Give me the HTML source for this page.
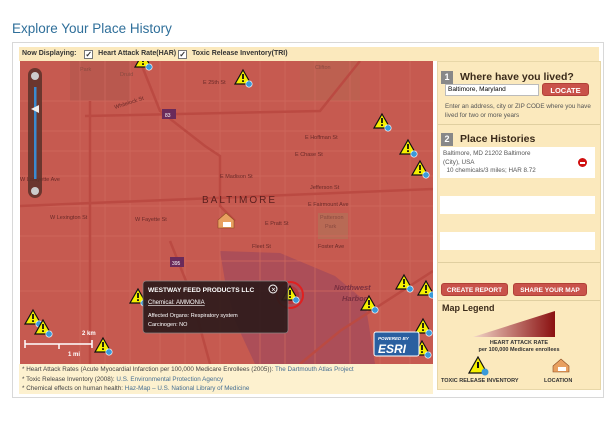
<!DOCTYPE html>
<html><head><meta charset="utf-8">
<style>
*{margin:0;padding:0;box-sizing:border-box}
body{width:615px;height:424px;background:#fff;font-family:"Liberation Sans",Verdana,sans-serif;position:relative;overflow:hidden}
.title{position:absolute;left:12px;top:21px;font-size:13.5px;color:#2f6f9a}
.outer{position:absolute;left:12px;top:42px;width:592px;height:356px;border:1px solid #d8d8d8;background:#fff}
.bar{position:absolute;left:6px;top:4px;width:580px;height:14px;background:#fbe9bd;font-size:7px;font-weight:bold;color:#333;line-height:14px;padding-left:3px}
.cb{display:inline-block;width:9px;height:9px;border:1px solid #777;background:#fff;vertical-align:-2px;font-size:8px;line-height:7px;text-align:center;margin:0 3px 0 0}
.map{position:absolute;left:7px;top:18px;width:413px;height:303px;overflow:hidden}
.panel{position:absolute;left:424px;top:18px;width:164px;height:329px;background:#fbe9bd;border:1px solid #e8d7a8}
.foot{position:absolute;left:6px;top:321px;width:414px;height:30px;background:#fdf1cf;font-size:6.3px;color:#444;line-height:9.5px;padding:1px 0 0 3px;white-space:nowrap}
.foot span{color:#466f93}
.num{display:inline-block;width:12px;height:13px;background:#888;color:#fff;font-size:9px;font-weight:bold;text-align:center;line-height:13px;margin-right:7px}
.h{font-size:10.5px;font-weight:bold;color:#3a2a1a}
.btn{position:absolute;height:13px;background:#c9524a;color:#fff;font-size:6.5px;font-weight:bold;text-align:center;line-height:13px;border-radius:3px;border:1px solid #b04038}
</style></head><body>
<div class="title">Explore Your Place History</div>
<div class="outer">
 <div class="bar">Now Displaying: &nbsp;&nbsp;&nbsp;<span class="cb">✓</span> Heart Attack Rate(HAR) <span class="cb">✓</span> Toxic Release Inventory(TRI)</div>
 <div class="map">
 <svg width="413" height="303" viewBox="0 0 413 303" font-family="Liberation Sans,sans-serif">
  <defs>
   <g id="w"><path d="M0,-8 L8,6 L-8,6 Z" fill="#f5f000" stroke="#111" stroke-width="1.2"/><rect x="-0.9" y="-4" width="1.8" height="5" fill="#111"/><rect x="-0.9" y="2.2" width="1.8" height="1.8" fill="#111"/><circle cx="6" cy="6" r="3.2" fill="#3a9ad9" stroke="#fff" stroke-width="0.6"/></g>
  </defs>
  <rect width="413" height="303" fill="#c65a50"/>
  <rect x="50" y="0" width="60" height="40" fill="#b9584e"/>
  <rect x="280" y="0" width="60" height="40" fill="#bd6050"/>
  <rect x="298" y="152" width="30" height="26" fill="#b86a55"/>
  <path d="M200,190 L260,192 L315,215 L345,240 L355,303 L235,303 L215,260 L205,220 Z" fill="#ac4e58"/>
  <g stroke="#cf6a5e" stroke-width="0.7" fill="none">
   <path d="M0,70 H413 M0,90 H413 M0,115 H413 M0,145 H413 M0,175 H413 M0,200 H413 M0,230 H413 M0,40 H413"/>
   <path d="M60,0 V303 M85,0 V303 M110,0 V303 M140,0 V303 M165,0 V303 M200,0 V303 M240,0 V303 M265,0 V303 M295,0 V303 M330,0 V303 M360,0 V303 M390,0 V303"/>
  </g>
  <g stroke="#bb4a42" stroke-width="2.5" fill="none">
   <path d="M120,0 L140,50 L185,85 L200,95 L200,145 L215,160"/>
   <path d="M0,145 L413,128"/>
   <path d="M65,55 L300,50 L340,0"/>
   <path d="M70,40 V303"/>
   <path d="M150,180 L170,230 L190,303"/>
   <path d="M413,210 L320,270 L280,303"/>
  </g>
  <g font-size="5.5" fill="#6a2a28">
   <text x="183" y="23">E 25th St</text><text x="285" y="78">E Hoffman St</text><text x="275" y="95">E Chase St</text>
   <text x="200" y="117">E Madison St</text><text x="290" y="128">Jefferson St</text><text x="288" y="145">E Fairmount Ave</text>
   <text x="30" y="158">W Lexington St</text><text x="115" y="160">W Fayette St</text><text x="245" y="164">E Pratt St</text>
   <text x="232" y="187">Fleet St</text><text x="298" y="187">Foster Ave</text><text x="0" y="120">W Lafayette Ave</text>
   <text x="95" y="48" transform="rotate(-18 95 48)">Whitelock St</text><text x="300" y="158" fill="#8a4a40">Patterson</text><text x="305" y="167" fill="#8a4a40">Park</text>
   <text x="295" y="8" fill="#8a4a40">Clifton</text><text x="60" y="10" fill="#8a4a40">Park</text><text x="100" y="15" fill="#8a4a40">Druid</text>
  </g>
  <text x="182" y="142" font-size="10" fill="#5a1f1e" letter-spacing="2">BALTIMORE</text>
  <text x="314" y="229" font-size="7.5" fill="#7a3040" font-style="italic" font-weight="bold">Northwest</text>
  <text x="322" y="240" font-size="7.5" fill="#7a3040" font-style="italic" font-weight="bold">Harbor</text>
  <rect x="142" y="48" width="14" height="10" fill="#6a2a5a"/><text x="145" y="56" font-size="5" fill="#fff">83</text>
  <rect x="150" y="196" width="14" height="10" fill="#6a2a5a"/><text x="152" y="204" font-size="5" fill="#fff">395</text>
  <rect x="8" y="7" width="14" height="130" rx="7" fill="#5a3028" opacity="0.85"/>
  <circle cx="15" cy="15" r="4" fill="#ccc"/><circle cx="15" cy="130" r="4" fill="#ccc"/>
  <rect x="14" y="26" width="2.5" height="92" fill="#3a8ad0"/>
  <path d="M11,48 L19,44 L19,52Z" fill="#eee"/>
  <path d="M198,159 L206,152 L214,159 L214,167 L198,167Z" fill="#e8a060" stroke="#8a4a20" stroke-width="0.6"/><rect x="203" y="161" width="8" height="5" fill="#fff"/>
  <use href="#w" x="223" y="17"/><use href="#w" x="362" y="61"/><use href="#w" x="388" y="87"/><use href="#w" x="400" y="108"/>
  <use href="#w" x="123" y="0"/><use href="#w" x="384" y="222"/><use href="#w" x="406" y="228"/><use href="#w" x="349" y="243"/>
  <use href="#w" x="13" y="257"/><use href="#w" x="23" y="267"/><use href="#w" x="83" y="285"/><use href="#w" x="402" y="288"/>
  <use href="#w" x="118" y="236"/><use href="#w" x="403" y="266"/>
  <circle cx="270" cy="234" r="13" fill="none" stroke="#e02020" stroke-width="2"/><circle cx="270" cy="234" r="9" fill="#c02020" opacity="0.5"/>
  <use href="#w" x="270" y="233"/>
  <rect x="123" y="220" width="145" height="52" rx="3" fill="#2e1b1b" opacity="0.92" stroke="#888" stroke-width="0.7"/>
  <text x="128" y="231" font-size="6.6" font-weight="bold" fill="#fff">WESTWAY FEED PRODUCTS LLC</text>
  <circle cx="253" cy="228" r="4" fill="none" stroke="#fff"/><text x="251" y="230.5" font-size="6" fill="#fff">✕</text>
  <text x="128" y="243" font-size="6" fill="#fff" text-decoration="underline">Chemical: AMMONIA</text>
  <text x="128" y="256" font-size="5.5" fill="#fff">Affected Organs: Respiratory system</text>
  <text x="128" y="265" font-size="5.5" fill="#fff">Carcinogen: NO</text>
  <g stroke="#fff" stroke-width="1.5"><path d="M5,283 H72 M5,279 V287 M72,279 V287 M39,283 V288"/></g>
  <text x="62" y="274" font-size="6" font-weight="bold" fill="#fff">2 km</text><text x="48" y="295" font-size="6" font-weight="bold" fill="#fff">1 mi</text>
  <rect x="354" y="271" width="45" height="24" rx="2" fill="#2a5fa0" stroke="#fff" stroke-width="1"/>
  <text x="358" y="279" font-size="4.5" font-weight="bold" fill="#fff" font-style="italic">POWERED BY</text>
  <text x="358" y="292" font-size="12" font-weight="bold" fill="#fff" font-style="italic">ESRI</text>
 </svg>
 </div>
 <div class="panel">
  <div style="position:absolute;left:3px;top:5px"><span class="num">1</span><span class="h">Where have you lived?</span></div>
  <div style="position:absolute;left:7px;top:22px;width:94px;height:12px;background:#fff;border:1px solid #bbb;font-size:6.5px;line-height:10px;padding-left:2px">Baltimore, Maryland</div>
  <div class="btn" style="left:104px;top:21px;width:47px;height:13px;font-size:7.5px">LOCATE</div>
  <div style="position:absolute;left:7px;top:40px;font-size:6.3px;color:#555;line-height:9px;width:156px">Enter an address, city or ZIP CODE where you have lived for two or more years</div>
  <div style="position:absolute;left:0;top:62px;width:162px;border-top:1px solid #e0cfa0"></div>
  <div style="position:absolute;left:3px;top:67px"><span class="num">2</span><span class="h">Place Histories</span></div>
  <div style="position:absolute;left:2px;top:85px;width:155px;height:31px;background:#fff;font-size:6.3px;color:#555;line-height:8.5px;padding:3px 0 0 3px">Baltimore, MD 21202 Baltimore<br>(City), USA<br>&nbsp;&nbsp;10 chemicals/3 miles; HAR 8.72
   <div style="position:absolute;right:8px;top:11px;width:9px;height:9px;border-radius:50%;background:#d01010"><div style="margin:3.5px 2px;height:2px;background:#fff"></div></div></div>
  <div style="position:absolute;left:2px;top:134px;width:155px;height:18px;background:#fff"></div>
  <div style="position:absolute;left:2px;top:170px;width:155px;height:18px;background:#fff"></div>
  <div style="position:absolute;left:0;top:200px;width:162px;border-top:1px solid #e0cfa0"></div>
  <div class="btn" style="left:3px;top:221px;width:67px">CREATE REPORT</div>
  <div class="btn" style="left:75px;top:221px;width:74px">SHARE YOUR MAP</div>
  <div style="position:absolute;left:0;top:238px;width:162px;border-top:1px solid #e0cfa0"></div>
  <div style="position:absolute;left:4px;top:241px;font-size:9px;font-weight:bold;color:#3a2a1a">Map Legend</div>
  <svg style="position:absolute;left:35px;top:248px" width="85" height="28"><defs><linearGradient id="g"><stop offset="0" stop-color="#f2d6c8"/><stop offset="1" stop-color="#8a1010"/></linearGradient></defs><path d="M0,27 L82,1 L82,27Z" fill="url(#g)"/></svg>
  <div style="position:absolute;left:0;top:278px;width:162px;text-align:center;font-size:5.5px;font-weight:bold;color:#333;line-height:7px">HEART ATTACK RATE<br>per 100,000 Medicare enrollees</div>
  <svg style="position:absolute;left:30px;top:294px" width="22" height="20"><g transform="translate(10,10)"><path d="M0,-9 L9,7 L-9,7 Z" fill="#f5f000" stroke="#111" stroke-width="1.2"/><rect x="-1" y="-4" width="2" height="6" fill="#111"/><circle cx="7" cy="6" r="3.5" fill="#3a9ad9"/></g></svg>
  <svg style="position:absolute;left:114px;top:296px" width="18" height="15"><path d="M1,8 L9,1 L17,8 L17,14 L1,14Z" fill="#e8a060" stroke="#8a4a20" stroke-width="0.6"/><rect x="6" y="9" width="8" height="4" fill="#fff"/></svg>
  <div style="position:absolute;left:3px;top:316px;font-size:5.5px;font-weight:bold;color:#333">TOXIC RELEASE INVENTORY</div>
  <div style="position:absolute;left:106px;top:316px;font-size:5.5px;font-weight:bold;color:#333">LOCATION</div>
 </div>
 <div class="foot">* Heart Attack Rates (Acute Myocardial Infarction per 100,000 Medicare Enrollees (2005)): <span>The Dartmouth Atlas Project</span><br>* Toxic Release Inventory (2008): <span>U.S. Environmental Protection Agency</span><br>* Chemical effects on human health: <span>Haz-Map – U.S. National Library of Medicine</span></div>
</div>
</body></html>
